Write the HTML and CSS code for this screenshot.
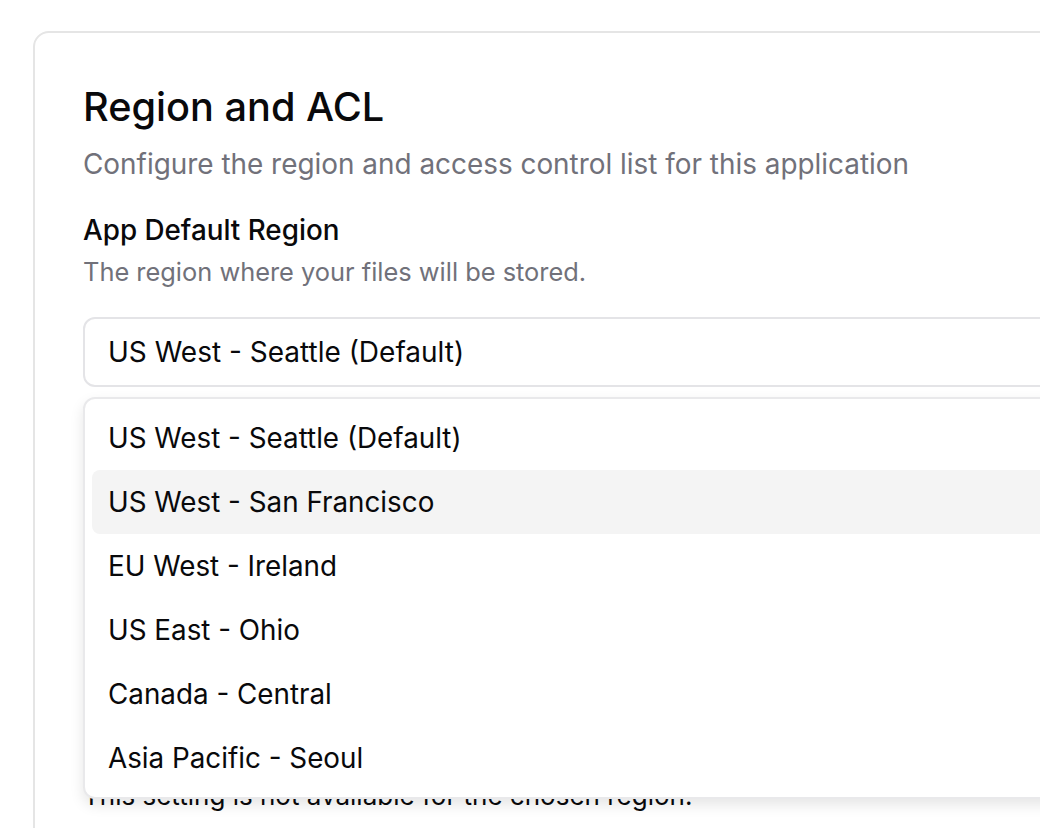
FILE: index.html
```html
<!DOCTYPE html>
<html lang="en">
<head>
  <meta charset="UTF-8" />
  <meta name="viewport" content="width=device-width, initial-scale=1" />
  <title>Region and ACL</title>
  <link rel="stylesheet" href="styles.css">
</head>
<body>

<section class="card">
  <h2>Region and ACL</h2>
  <p class="subtitle">Configure the region and access control list for this application</p>

  <div class="field">
    <div class="label">App Default Region</div>
    <div class="help">The region where your files will be stored.</div>
    <div class="select-wrap">
      <div class="select">US West - Seattle (Default)</div>
      <ul class="menu">
        <li>US West - Seattle (Default)</li>
        <li class="active">US West - San Francisco</li>
        <li>EU West - Ireland</li>
        <li>US East - Ohio</li>
        <li>Canada - Central</li>
        <li>Asia Pacific - Seoul</li>
      </ul>
    </div>
  </div>

  <p class="note">This setting is not available for the chosen region.</p>
</section>

</body>
</html>
```

FILE: styles.css
```css
* {
  margin: 0; padding: 0; box-sizing: border-box;
  font-family: 'Inter', 'Noto Sans', sans-serif;
}
body {
  background: #fff;
  color: #09090b;
  padding: 31px 0 0 33px;
  overflow: hidden;
  height: 828px;
}
.card {
  width: 1200px;
  border: 2px solid #e5e5e5;
  border-radius: 16px;
  padding: 48px 48px 60px;
  background: #fff;
}
.card h2 {
  font-size: 39.7px;
  line-height: 52px;
  font-weight: 500;
}
.subtitle {
  margin-top: 11px;
  font-size: 27.9px;
  line-height: 40px;
  color: #71717a;
}
.field {
  margin-top: 26px;
}
.label {
  font-size: 27.8px;
  line-height: 40px;
  font-weight: 500;
}
.help {
  margin-top: 4px;
  font-size: 25.4px;
  line-height: 36px;
  color: #71717a;
}
.select-wrap {
  position: relative;
  margin-top: 27px;
}
.select {
  height: 70px;
  border: 2px solid #e4e4e7;
  border-radius: 12px;
  padding: 0 23px;
  font-size: 28px;
  line-height: 66px;
  background: #fff;
}
.menu {
  position: absolute;
  top: calc(100% + 10px);
  left: 0;
  right: 0;
  list-style: none;
  background: #fff;
  border: 2px solid #e9e9eb;
  border-radius: 12px;
  padding: 7px;
  box-shadow: 0 6px 14px rgba(0,0,0,0.1);
  z-index: 2;
}
.menu li {
  height: 64px;
  line-height: 64px;
  padding: 0 16px;
  font-size: 27.8px;
  border-radius: 8px;
}
.menu li.active {
  background: #f4f4f4;
}
.note {
  margin-top: 391px;
  font-size: 26px;
  line-height: 36px;
}
```
